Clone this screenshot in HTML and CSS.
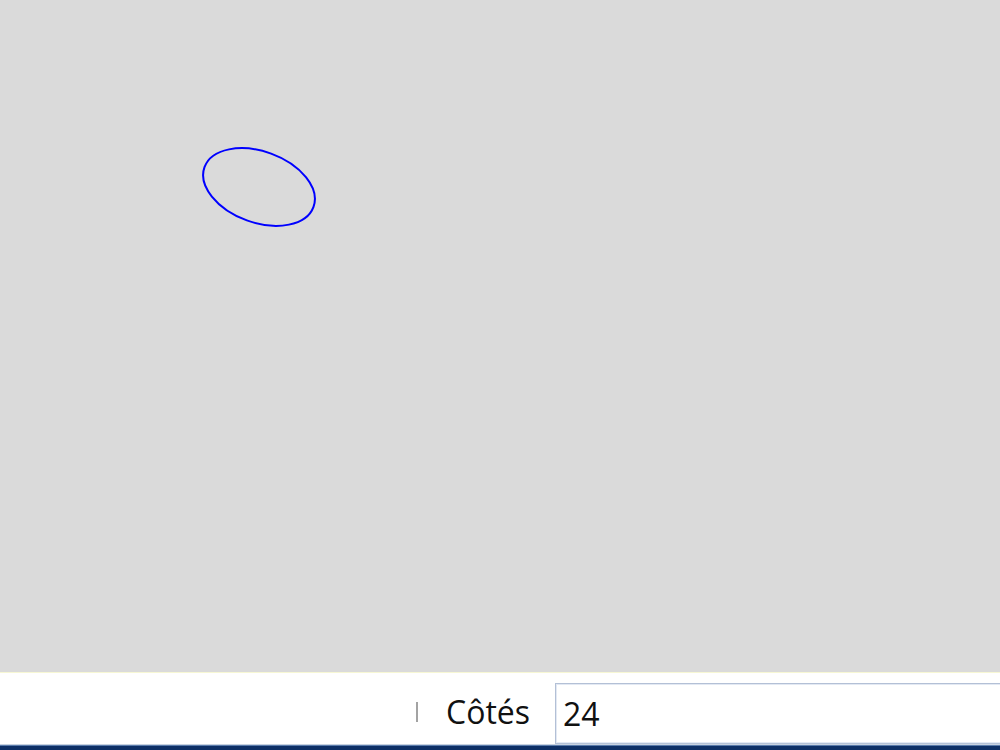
FILE: index.html
```html
<!DOCTYPE html>
<html>
<head>
  <title>Polygone</title>
  <meta charset="UTF-8" />
  <link rel="stylesheet" href="styles.css">
</head>
<body>
  <div class="canvas">
    <svg width="1000" height="672" viewBox="0 0 1000 672">
      <ellipse cx="259" cy="187" rx="58" ry="35.5" transform="rotate(20 259 187)"
        fill="none" stroke="#0000ff" stroke-width="2" />
    </svg>
  </div>
  <div class="toolbar">
    <span class="sep"></span>
    <label class="label" for="sides">Côtés</label>
    <input type="text" id="sides" class="field" value="24">
  </div>
  <div class="statusline"></div>
</body>
</html>
```

FILE: styles.css
```css
html, body {
  margin: 0;
  padding: 0;
  overflow: hidden;
}
body {
  width: 1000px;
  height: 750px;
  font-family: "Open Sans", "Noto Sans", sans-serif;
  background: #ffffff;
}
.canvas {
  height: 672px;
  background: #dadada;
}
.canvas svg {
  display: block;
}
.toolbar {
  display: flex;
  align-items: center;
  height: 72px;
  border-top: 1px solid #f7f7d4;
  box-sizing: border-box;
  padding-top: 6px;
  padding-left: 416px;
  background: #ffffff;
  white-space: nowrap;
}
.sep {
  flex: none;
  width: 2px;
  height: 20px;
  background: #a3a3a3;
}
.label {
  flex: none;
  margin-left: 28px;
  margin-right: 25px;
  font-size: 32px;
  color: #111111;
}
.field {
  flex: none;
  align-self: flex-end;
  width: 480px;
  height: 61px;
  box-sizing: border-box;
  padding: 0 7px;
  border: 1px solid #b3c0d6;
  box-shadow: inset 0 0 0 1px #e3e9f3;
  font-family: inherit;
  font-size: 32px;
  color: #111111;
  outline: none;
}
.statusline {
  height: 6px;
  border-top: 1px solid #c8d2e0;
  background: linear-gradient(#5a7bab 0, #5a7bab 1px, #0d2f66 1px);
}
```
